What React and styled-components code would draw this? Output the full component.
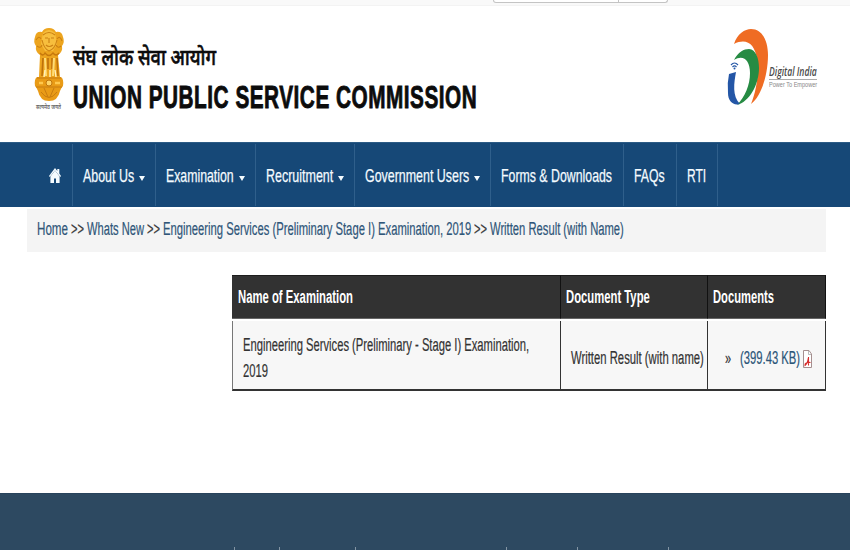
import React, { useLayoutEffect, useRef, useState } from 'react'
import styled, { createGlobalStyle } from 'styled-components'

const GlobalStyle = createGlobalStyle`
    * { box-sizing: border-box; }
    body {
        margin: 0;
        background: #fff;
        font-family: "Liberation Sans", Arial, sans-serif;
        overflow: hidden;
    }
`
const Page = styled.div`
    width: 850px;
    height: 550px;
    overflow: hidden;
    display: flex;
    flex-direction: column;
`
const FitBlock = styled.span`
    display: inline-block;
    flex: none;
    width: ${p => p.$width}px;
    white-space: nowrap;
    span {
        display: inline-block;
        transform-origin: 0 50%;
    }
`
const TopStrip = styled.div`
    height: 6px;
    flex: none;
    background: #f9f9f9;
    border-bottom: 1px solid #f3f3f3;
    padding-left: 493px;
`
const SearchBox = styled.div`
    display: flex;
    width: 175px;
    height: 3px;
    border: 1px solid #c4c4c4;
    border-top: 0;
    border-radius: 0 0 4px 4px;
    background: #fff;
`
const SearchField = styled.div`
    width: 125px;
    border-right: 1px solid #c4c4c4;
`
const Header = styled.header`
    height: 136px;
    flex: none;
    display: flex;
    justify-content: space-between;
    padding: 21px 31px 0 34px;
`
const Brand = styled.div`
    display: flex;
    gap: 9px;
`
const Emblem = styled.svg`
    width: 30px;
    height: 86px;
    flex: none;
    overflow: visible;
`
const Titles = styled.div`
    display: flex;
    flex-direction: column;
    padding-top: 14px;
    color: #0c0c0c;
`
const HindiTitle = styled.div`
    height: 35px;
    line-height: 37px;
    font-family: "Noto Sans Devanagari", "Noto Sans", sans-serif;
    font-size: 23px;
    font-weight: 500;
    -webkit-text-stroke: 0.6px #0c0c0c;
`
const EnglishTitle = styled.h1`
    margin: 0;
    height: 42px;
    line-height: 42px;
    font-size: 32px;
    font-weight: bold;
    letter-spacing: 0.8px;
    -webkit-text-stroke: 0.9px #0c0c0c;
`
const DigitalLogo = styled.div`
    display: flex;
    width: 92px;
`
const Swirl = styled.svg`
    width: 42px;
    height: 80px;
    flex: none;
`
const LogoText = styled.div`
    padding-top: 38px;
    font-family: "Open Sans", sans-serif;
    font-style: italic;
    font-size: 12px;
    font-weight: 600;
    color: #4b4b4b;
    line-height: 14px;
`
const Tagline = styled.div`
    border-top: 1px solid #aaa;
    font-family: "Liberation Sans", sans-serif;
    font-style: normal;
    font-weight: normal;
    font-size: 8px;
    line-height: 9px;
    color: #888;
    display: flex;
`
const Nav = styled.nav`
    height: 65px;
    flex: none;
    display: flex;
    padding-left: 37px;
    background: #164877;
    border-top: 1px solid #2c5b85;
    color: #f4fbff;
`
const NavItem = styled.div`
    width: ${p => p.$width}px;
    height: 62px;
    margin-top: 1px;
    padding: 2px 0 0 ${p => p.$pad || 10}px;
    display: flex;
    align-items: center;
    border-right: 1px solid #2f5f8b;
    font-size: 19px;
    -webkit-text-stroke: 0.25px #f4fbff;
`
const Caret = styled.i`
    margin: 4px 0 0 5px;
    border: 3px solid transparent;
    border-top: 5px solid #f4fbff;
    border-bottom: 0;
`
const HomeIcon = styled.svg`
    width: 12px;
    height: 15px;
    margin-top: -2px;
`
const Breadcrumb = styled.div`
    display: flex;
    align-items: center;
    flex: none;
    width: 799px;
    height: 43px;
    margin: 2px 0 0 27px;
    padding: 0 0 3px 10px;
    background: #f4f4f4;
    font-size: 18px;
    gap: 3px;
    color: #2f5679;
    -webkit-text-stroke: 0.2px currentColor;
`
const Separator = styled.span`
    color: #333;
    display: flex;
`
const Results = styled.div`
    display: grid;
    flex: none;
    width: 594px;
    margin: 23px 0 0 232px;
    grid-template-columns: 329px 147px 118px;
    grid-template-rows: 44px 72px;
`
const HeadCell = styled.div`
    display: flex;
    align-items: center;
    padding-left: ${p => p.$pad || 5}px;
    background: #323232;
    border-top: 1px solid #1d1d1d;
    border-right: 1px solid #111;
    border-bottom: 1px solid #666;
    font-size: 18px;
    font-weight: bold;
    color: #fff;
`
const Cell = styled.div`
    display: flex;
    align-items: center;
    margin-top: 2px;
    padding: ${p => p.$pad};
    background: #f7f7f7;
    border-right: 1px solid #333;
    border-bottom: 2px solid #333;
    font-size: 18px;
    color: #333;
    -webkit-text-stroke: 0.2px currentColor;
    &.first { border-left: 1px solid #777; }
`
const ExamName = styled.div`
    line-height: 26px;
`
const FileLink = styled.a`
    display: flex;
    align-items: center;
    margin-left: 9px;
    gap: 3px;
    color: #2b5578;
`
const Footer = styled.footer`
    display: grid;
    align-items: end;
    flex: none;
    height: 57px;
    margin-top: auto;
    grid-template-columns: 235px 45px 76px 151px 71px 91px 1fr;
    background: #2d4961;
    border-top: 1px solid #28435c;
`
const FooterMark = styled.i`
    height: 3px;
    border-right: 1px solid #8394a3;
    &:last-child { border: 0; }
`

// keeps the narrow lettering at a steady width, whatever its natural one is
function Fit({ w, children }) {
    const ref = useRef(null)
    const [scale, setScale] = useState(1)
    useLayoutEffect(() => {
        setScale(w / ref.current.offsetWidth)
    }, [w])

    return (
        <FitBlock $width={w}>
            <span ref={ref} style={{ transform: `scaleX(${scale})` }}>{children}</span>
        </FitBlock>
    )
}

function LionEmblem() {
    return (
        <Emblem viewBox="0 0 30 86" fill="none">
            <path d="M8 5Q10 1 15 1T22 5Q28 4 29 10Q31 15 28 19Q29 25 24 28L26 50H5L6 28Q1 25 2 19Q-1 15 1 10Q2 4 8 5Z" fill="#eda51f" />
            <path d="M9 6Q15 0 21 6L23 17L19 24H11L7 17Z" fill="#f7be3d" />
            <path d="M9 8Q15 3 21 8M11 11H14M17 11H20M15 11V16M12 18Q15 21 19 18M8 13Q10 22 15 24Q21 22 23 13M2 13Q5 8 7 12M23 12Q26 8 28 14M3 19Q7 22 8 18M22 18Q24 22 27 19" stroke="#cb8013" strokeWidth="1.1" />
            <path d="M6 26Q9 30 11 26Q15 31 19 26Q22 30 25 26" stroke="#c7780c" strokeWidth="1.3" />
            <path d="M9 31L8 49M14 31V42M18 31V42M23 31L24 49" stroke="#bd710c" strokeWidth="1.6" />
            <path d="M11 31L12 49M20 31L19 49" stroke="#ffdc75" strokeWidth="2" />
            <path d="M11 43L10 50M16 43V50M21 43L22 50" stroke="#fff1bd" strokeWidth="1.4" />
            <path d="M3 50H27Q30 52 29 59Q27 61 26 64Q24 74 15 74T4 64Q3 61 1 59Q0 52 3 50Z" fill="#e99b16" />
            <path d="M3 51H27M2 60H28M7 65Q15 76 23 65M10 61L14 70M20 61L16 70" stroke="#c87c10" />
            <circle cx="15" cy="56" r="3" fill="#ffd466" stroke="#c0750c" />
            <path d="M5 56H9M21 56H26" stroke="#ffc84d" strokeWidth="2.5" />
            <text x="2" y="82" fontSize="6" fontWeight="600" textLength="25" lengthAdjust="spacingAndGlyphs" fill="#666" fontFamily="Noto Sans Devanagari, sans-serif">सत्यमेव जयते</text>
        </Emblem>
    )
}

function DigitalIndia() {
    return (
        <DigitalLogo>
            <Swirl viewBox="0 0 42 80" fill="none">
                <path d="M7 17C10 7 18 2 24 2C36 2 41 15 41 28C41 48 34 70 24 77C29 65 32 48 30 33C28 16 19 11 7 17Z" fill="#ef6c23" />
                <path d="M7 33C11 25 17 22 22 22C29 22 32 32 32 41C32 58 22 75 10 78C18 70 23 58 23 46C23 33 16 27 7 33Z" fill="#268b43" />
                <path d="M2 47L9 45C7 56 5 69 13 77C6 79 1 74 1 66Q0 56 2 47Z" fill="#2456a6" />
                <path d="M4 38Q7.500 34 11 38M5.500 40Q7.500 38 9.500 40" stroke="#2456a6" strokeWidth="1.200" />
                <circle cx="7.500" cy="41.500" r="1" fill="#2456a6" />
            </Swirl>
            <LogoText>
                <Fit w={48}>Digital India</Fit>
                <Tagline><Fit w={48}>Power To Empower</Fit></Tagline>
            </LogoText>
        </DigitalLogo>
    )
}

function Home() {
    return (
        <HomeIcon viewBox="0 0 12 15">
            <path d="M6 0L8.300 3V1H10.300V5.500L12 8L11.200 9L6 2.500L.8 9L0 8Z" fill="#f4fbff" />
            <path d="M6 2.500L10.600 8.500V15H7V10.500H5V15H1.400V8.500Z" fill="#f4fbff" />
        </HomeIcon>
    )
}

function PdfIcon() {
    return (
        <svg width="9" height="18" viewBox="0 0 9 18" fill="none">
            <path d="M.5.5H6L8.500 4V17.500H.5Z" fill="#fff" stroke="#a58f8f" />
            <path d="M5.500 1V4.500H8" stroke="#aaa" strokeWidth=".8" />
            <path d="M5.500 7V15.500M5.500 7C5 11 4 14 2 15.500C1.500 13.500 4 12 7.500 12.500" stroke="#d62b2b" strokeWidth="1.100" />
        </svg>
    )
}

const menu = [
    { label: 'About Us', width: 83, text: 51, caret: true },
    { label: 'Examination', width: 100, text: 68, caret: true },
    { label: 'Recruitment', width: 99, text: 67, caret: true },
    { label: 'Government Users', width: 136, text: 104, caret: true },
    { label: 'Forms & Downloads', width: 133, text: 111 },
    { label: 'FAQs', width: 53, text: 31 },
    { label: 'RTI', width: 41, text: 19 },
]

function App() {
    return (
        <Page>
            <GlobalStyle />
            <TopStrip><SearchBox><SearchField /></SearchBox></TopStrip>
            <Header>
                <Brand>
                    <LionEmblem />
                    <Titles>
                        <HindiTitle><Fit w={143}>संघ लोक सेवा आयोग</Fit></HindiTitle>
                        <EnglishTitle><Fit w={404}>UNION PUBLIC SERVICE COMMISSION</Fit></EnglishTitle>
                    </Titles>
                </Brand>
                <DigitalIndia />
            </Header>
            <Nav>
                <NavItem $width={36} $pad={12}><Home /></NavItem>
                {menu.map(({ label, width, text, caret }) => (
                    <NavItem key={label} $width={width}>
                        <Fit w={text}>{label}</Fit>
                        {caret && <Caret />}
                    </NavItem>
                ))}
            </Nav>
            <Breadcrumb>
                <Fit w={31}>Home</Fit>
                <Separator><Fit w={13}>&gt;&gt;</Fit></Separator>
                <Fit w={57}>Whats New</Fit>
                <Separator><Fit w={13}>&gt;&gt;</Fit></Separator>
                <Fit w={308}>Engineering Services (Preliminary Stage I) Examination, 2019</Fit>
                <Separator><Fit w={13}>&gt;&gt;</Fit></Separator>
                <Fit w={134}>Written Result (with Name)</Fit>
            </Breadcrumb>
            <Results>
                <HeadCell $pad={6}><Fit w={115}>Name of Examination</Fit></HeadCell>
                <HeadCell><Fit w={84}>Document Type</Fit></HeadCell>
                <HeadCell><Fit w={61}>Documents</Fit></HeadCell>
                <Cell className="first" $pad="6px 0 0 10px">
                    <ExamName>
                        <Fit w={286}>Engineering Services (Preliminary - Stage I) Examination,</Fit><br />
                        <Fit w={25}>2019</Fit>
                    </ExamName>
                </Cell>
                <Cell $pad="7px 0 0 10px"><Fit w={133}>Written Result (with name)</Fit></Cell>
                <Cell $pad="7px 0 0 17px">
                    <Fit w={6}>»</Fit>
                    <FileLink><Fit w={60}>(399.43 KB)</Fit><PdfIcon /></FileLink>
                </Cell>
            </Results>
            <Footer>
                {[1, 2, 3, 4, 5, 6, 7].map(n => <FooterMark key={n} />)}
            </Footer>
        </Page>
    )
}

export default App
